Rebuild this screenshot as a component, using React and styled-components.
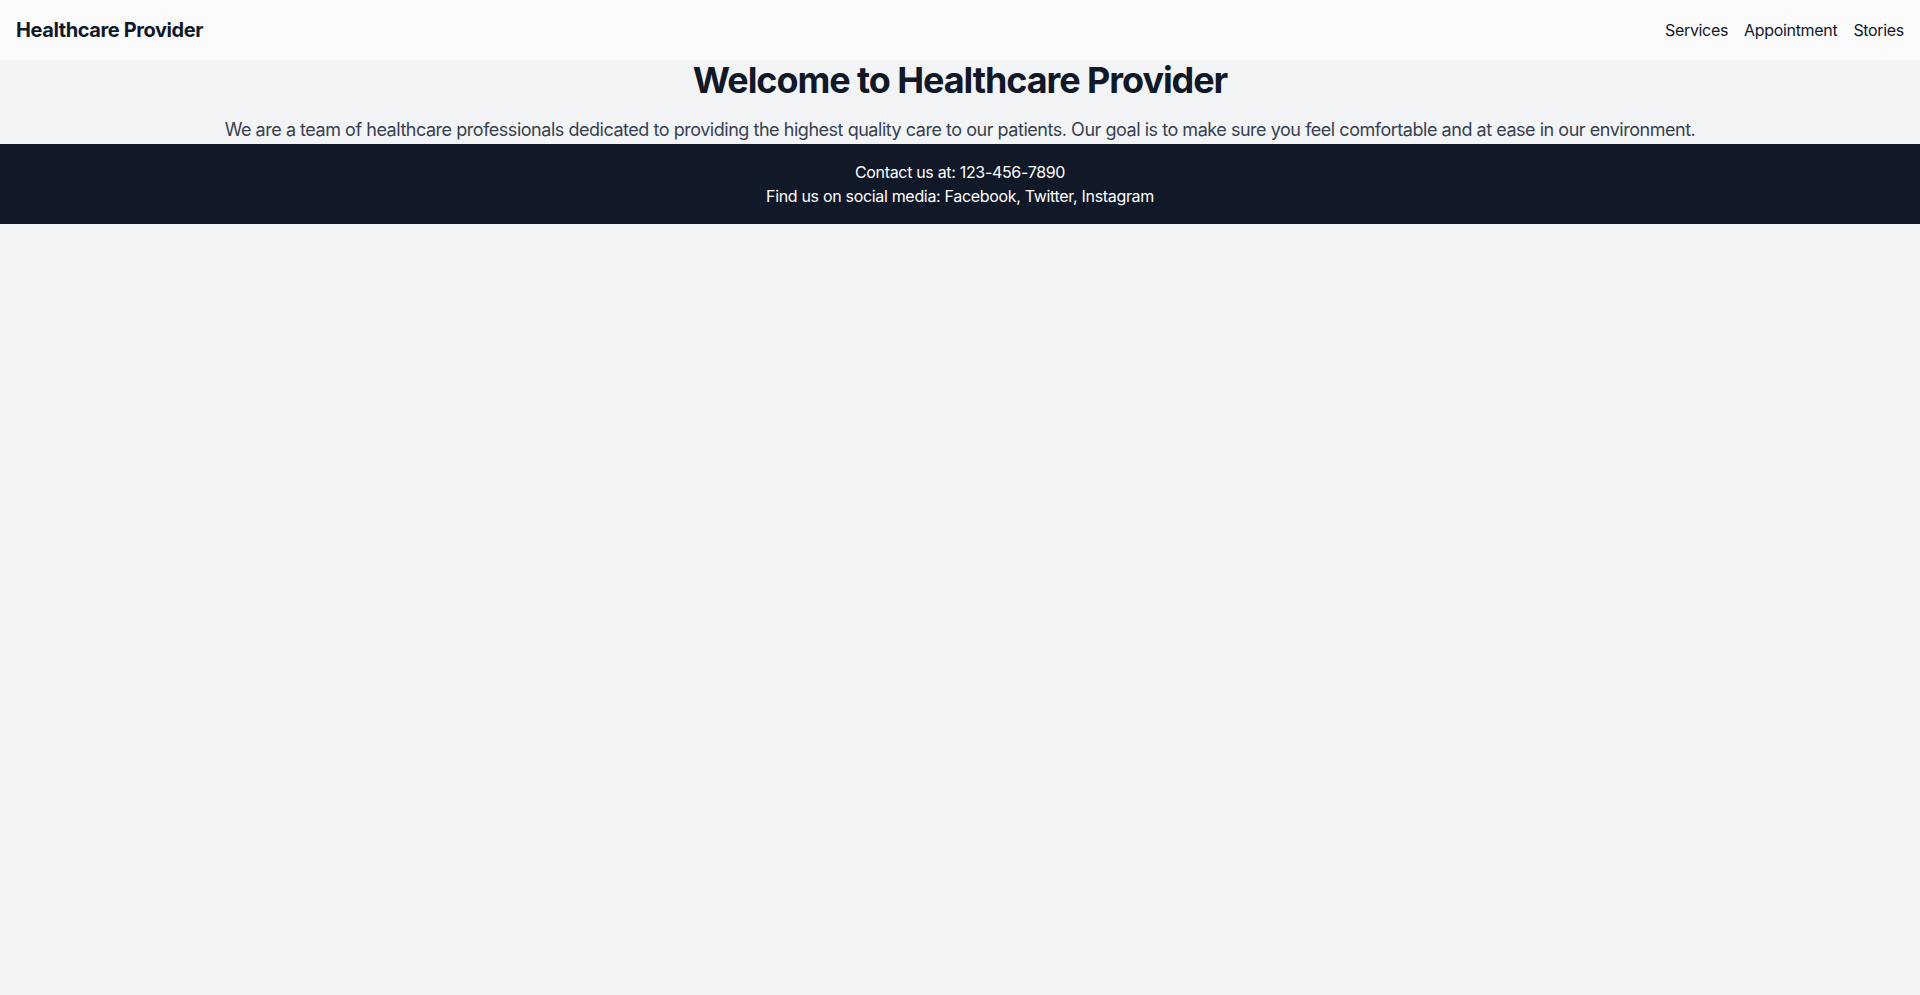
import React from "react";
import styled, { createGlobalStyle } from "styled-components";

const GlobalStyle = createGlobalStyle`
  * {
    box-sizing: border-box;
  }
  body {
    margin: 0;
    background-color: #f3f4f6;
    font-family: Inter, "Noto Sans", "Liberation Sans", sans-serif;
    -webkit-font-smoothing: antialiased;
  }
`;

const App = () => {
  return (
    <>
      <GlobalStyle />
      <Page>
        <Header>
          <Brand>Healthcare Provider</Brand>
          <Nav>
            <NavLink href="#services">Services</NavLink>
            <NavLink href="#appointment">Appointment</NavLink>
            <NavLink href="#stories">Stories</NavLink>
          </Nav>
        </Header>
        <Main>
          <Title>Welcome to Healthcare Provider</Title>
          <Intro>
            We are a team of healthcare professionals dedicated to providing the
            highest quality care to our patients. Our goal is to make sure you
            feel comfortable and at ease in our environment.
          </Intro>
        </Main>
        <Footer>
          <FooterLine>Contact us at: 123-456-7890</FooterLine>
          <FooterLine>Find us on social media: Facebook, Twitter, Instagram</FooterLine>
        </Footer>
      </Page>
    </>
  );
};

export default App;

const Page = styled.div`
  min-height: 995px;
  background-color: #f3f4f6;
`;

const Header = styled.header`
  display: flex;
  justify-content: space-between;
  align-items: center;
  height: 60px;
  padding: 0 16px;
  background-color: #fbfbfc;
`;

const Brand = styled.div`
  font-size: 20px;
  line-height: 28px;
  font-weight: 700;
  letter-spacing: -0.02em;
  color: #111827;
`;

const Nav = styled.nav`
  display: flex;
  align-items: center;
  gap: 16px;
`;

const NavLink = styled.a`
  font-size: 16px;
  line-height: 24px;
  letter-spacing: -0.02em;
  color: #111827;
  text-decoration: none;
`;

const Main = styled.main`
  text-align: center;
`;

const Title = styled.h1`
  margin: 0 0 16px;
  font-size: 36px;
  line-height: 40px;
  font-weight: 700;
  letter-spacing: -0.03em;
  color: #111827;
`;

const Intro = styled.p`
  margin: 0;
  font-size: 18px;
  line-height: 28px;
  letter-spacing: -0.026em;
  color: #374151;
`;

const Footer = styled.footer`
  padding: 16px;
  background-color: #111827;
  text-align: center;
`;

const FooterLine = styled.p`
  margin: 0;
  font-size: 16px;
  line-height: 24px;
  letter-spacing: -0.02em;
  color: #ffffff;
`;
